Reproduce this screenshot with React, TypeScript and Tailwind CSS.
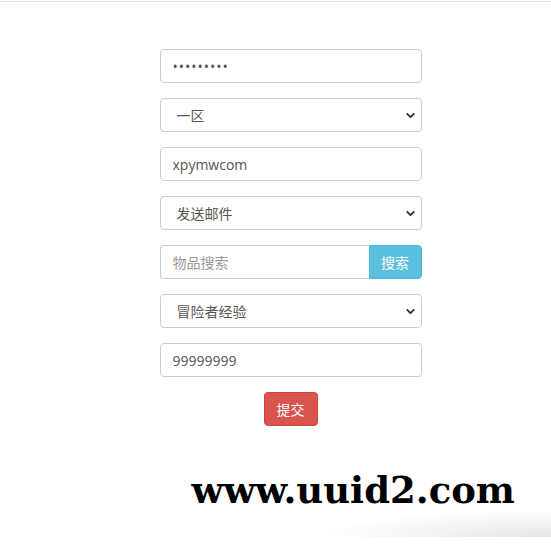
import { ChevronDown } from "lucide-react"

const font = { fontFamily: '"Open Sans", "Noto Sans CJK SC", sans-serif' }

function Select({ value }: { value: string }) {
    return (
        <div className="relative">
            <select
                defaultValue={value}
                className="block w-full h-[34px] appearance-none rounded-[4px] border border-[#cccccc] bg-white pl-[16px] pr-8 text-[14px] text-[#555555] outline-none"
            >
                <option>{value}</option>
            </select>
            <ChevronDown size={13} strokeWidth={3.5} className="absolute right-[5px] top-[11px] text-[#333]" />
        </div>
    )
}

const inputCls = "block w-full h-[34px] rounded-[4px] border border-[#cccccc] bg-white px-[12px] text-[14px] text-[#555555] outline-none placeholder:text-[#999999]"

export default function App() {
    return (
        <div className="min-h-[547px] bg-white border-t border-[#e3e3e3] mt-[1px] flex flex-col items-center" style={font}>
            <form className="w-[262px] mt-[47px] ml-[30px] flex flex-col gap-[15px]" onSubmit={e => e.preventDefault()}>
                <input type="password" defaultValue="123456789" className={inputCls + " tracking-[1px]"} />
                <Select value="一区" />
                <input type="text" defaultValue="xpymwcom" className={inputCls} />
                <Select value="发送邮件" />
                <div className="flex">
                    <input type="text" placeholder="物品搜索" className="block flex-1 min-w-0 h-[34px] rounded-l-[4px] border border-r-0 border-[#cccccc] bg-white px-[12px] text-[14px] text-[#555555] outline-none placeholder:text-[#999999]" />
                    <button type="button" className="w-[53px] h-[34px] rounded-r-[4px] bg-[#5bc0de] border border-[#46b8da] text-white text-[14px]">
                        搜索
                    </button>
                </div>
                <Select value="冒险者经验" />
                <input type="text" defaultValue="99999999" className={inputCls} />
                <div className="flex justify-center">
                    <button type="submit" className="w-[54px] h-[34px] rounded-[4px] bg-[#d9534f] border border-[#d43f3a] text-white text-[14px]">
                        提交
                    </button>
                </div>
            </form>
            <div className="w-full flex justify-end pr-[36px] mt-[46px] bg-[radial-gradient(ellipse_at_bottom_right,#e6e6e6_0%,#ffffff_30%)] pb-[28px]">
                <span className="text-[37px] font-bold text-black leading-none" style={{ fontFamily: '"DejaVu Serif", "Liberation Serif", serif' }}>
                    www.uuid2.com
                </span>
            </div>
        </div>
    )
}
